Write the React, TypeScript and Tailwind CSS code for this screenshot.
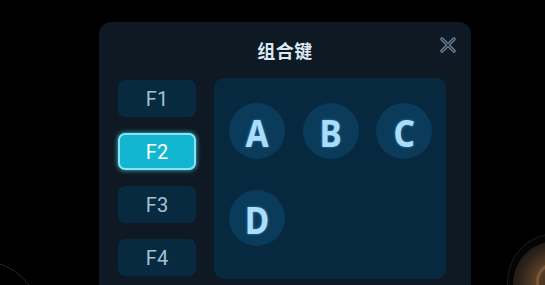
import React from "react";

const keys = ["F1", "F2", "F3", "F4"];
const letters = ["A", "B", "C", "D"];

export default function App() {
  return (
    <div className="relative w-[545px] h-[285px] bg-black overflow-hidden">
      {/* background decorations */}
      <div className="absolute left-[-82px] top-[260px] w-[124px] h-[124px] rounded-full border border-[#2a2a2a]" />
      <div className="absolute left-[507px] top-[233px] w-[98px] h-[98px] rounded-full border border-[#1e1e1e] bg-[#050505]" />
      <div
        className="absolute left-[513px] top-[241px] w-[86px] h-[86px] rounded-full"
        style={{
          background:
            "radial-gradient(circle at 50% 50%, #3a2a1c 0%, #5a3e28 35%, #2e231a 60%, #1a1410 80%, #0d0b09 100%)",
        }}
      />
      <div className="absolute left-[536px] top-[262px] w-[40px] h-[40px] rounded-full border-[3px] border-[#7a5634]" />

      {/* dialog */}
      <div
        className="relative ml-[99px] mt-[22px] w-[372px] h-[290px] rounded-[12px] bg-[#0e1923]"
        style={{ fontFamily: "Roboto, 'Noto Sans', 'Noto Sans CJK SC', sans-serif" }}
      >
        <div className="h-[56px] flex items-center justify-center">
          <span
            className="text-[18px] font-bold text-[#dce9f2] leading-none tracking-[0.5px]"
            style={{ fontFamily: "'Noto Sans CJK SC', sans-serif" }}
          >
            组合键
          </span>
        </div>
        <button className="absolute right-[15px] top-[15px] w-[16px] h-[16px]">
          <svg viewBox="0 0 16 16" width="16" height="16">
            <path d="M2 2 L14 14 M14 2 L2 14" stroke="#7c93aa" strokeWidth="3.2" strokeLinecap="round" />
            <path d="M2 2 L14 14 M14 2 L2 14" stroke="#1a2c3e" strokeWidth="1.2" strokeLinecap="round" />
          </svg>
        </button>

        <div className="flex pl-[19px] gap-[18px]">
          <div className="flex flex-col gap-[16px] pt-[2px]">
            {keys.map((k) => {
              const active = k === "F2";
              return active ? (
                <div
                  key={k}
                  className="w-[78px] h-[37px] rounded-[7px] bg-[#12b6d1] border-2 border-[#8ae2f3] shadow-[0_0_5px_#3fc8e6] flex items-center justify-center text-[20px] text-white pt-[1px]"
                >
                  {k}
                </div>
              ) : (
                <div
                  key={k}
                  className="w-[78px] h-[37px] rounded-[7px] bg-[#082a41] flex items-center justify-center text-[20px] text-[#a3c2d4] pt-[1px]"
                >
                  {k}
                </div>
              );
            })}
          </div>
          <div className="w-[232px] h-[201px] rounded-[10px] bg-[#072940] pt-[25px] pl-[15px]">
            <div className="grid grid-cols-[56px_56px_56px] gap-x-[17.5px] gap-y-[31px]">
              {letters.map((l) => (
                <div
                  key={l}
                  className="w-[56px] h-[56px] rounded-full bg-[#0b3b5b] flex items-center justify-center"
                >
                  <span
                    className="text-[38px] font-bold text-[#a8defb] leading-none pt-[1px] scale-x-[0.88]"
                    style={{ fontFamily: "'Noto Sans', sans-serif", textShadow: "0 0 3px rgba(120,200,255,0.5)" }}
                  >
                    {l}
                  </span>
                </div>
              ))}
            </div>
          </div>
        </div>
      </div>
    </div>
  );
}
